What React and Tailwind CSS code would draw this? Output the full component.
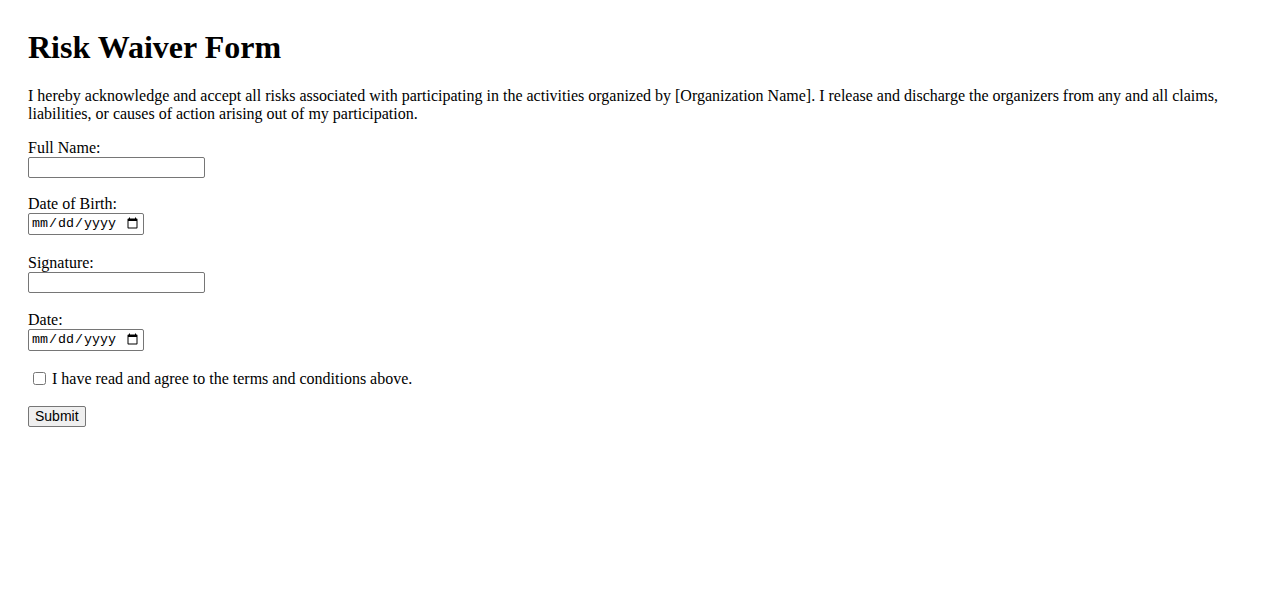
import { useState } from "react";

function Field({ label, type, gap }) {
  const isDate = type === "date";
  return (
    <div className={gap}>
      <label className="block leading-[18px]">{label}</label>
      <input
        type={type}
        className={
          "block border border-[#767676] rounded-[2px] bg-white px-[2px] text-[13.33px] leading-none " +
          (isDate
            ? "w-[116px] h-[22px] font-['Liberation_Mono','DejaVu_Sans_Mono',monospace]"
            : "w-[177px] h-[21px] font-['Liberation_Sans',Arial,sans-serif]")
        }
      />
    </div>
  );
}

function App() {
  const [agree, setAgree] = useState(false);

  return (
    <div className="min-h-screen bg-white text-black px-[28px] pt-[29px] font-['Liberation_Serif','Times_New_Roman',serif] text-[16px]">
      <h1 className="text-[32px] font-bold leading-[37px] mb-[21px]">
        Risk Waiver Form
      </h1>

      <p className="leading-[18px] mb-[16px]">
        I hereby acknowledge and accept all risks associated with participating in the activities
        organized by [Organization Name]. I release and discharge the organizers from any and all
        claims, liabilities, or causes of action arising out of my participation.
      </p>

      <form onSubmit={(e) => e.preventDefault()}>
        <Field label="Full Name:" type="text" gap="mb-[17px]" />
        <Field label="Date of Birth:" type="date" gap="mb-[19px]" />
        <Field label="Signature:" type="text" gap="mb-[18px]" />
        <Field label="Date:" type="date" gap="mb-[19px]" />

        <div className="mb-[16px] flex items-center">
          <input
            type="checkbox"
            checked={agree}
            onChange={(e) => setAgree(e.target.checked)}
            className="ml-[5px] mr-[6px] w-[13px] h-[13px] -mt-[2px]"
          />
          <label className="leading-[18px]">I have read and agree to the terms and conditions above.</label>
        </div>

        <button
          type="submit"
          className="h-[21px] px-[6px] border border-[#767676] rounded-[2px] bg-[#efefef] text-[14px] leading-none font-['Liberation_Sans',Arial,sans-serif]"
        >
          Submit
        </button>
      </form>
    </div>
  );
}

export default App;
